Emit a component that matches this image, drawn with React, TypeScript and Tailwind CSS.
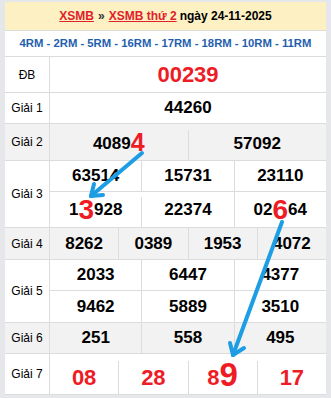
import React from 'react';

const line = 'border-[#dcdcdc]';

function Sep({ gap = 0 }: { gap?: number }) {
  // vertical divider between cells; some rows leave a small gap on top
  const top = gap === 7 ? 'mt-[7px]' : gap === 6 ? 'mt-[6px]' : gap === 5 ? 'mt-[5px]' : '';
  return <div className={`w-px self-stretch bg-[#dcdcdc] ${top}`} />;
}

function Cell({ children, size = 'text-[17px]', red = false }: { children: React.ReactNode; size?: string; red?: boolean }) {
  return (
    <div className={`flex-1 flex items-center justify-center font-bold ${size} ${red ? 'text-[#ee1c25]' : 'text-black'}`}>
      {children}
    </div>
  );
}

function Hi({ children, size }: { children: React.ReactNode; size: string }) {
  return <span className={`text-[#ee1c25] ${size} leading-none`}>{children}</span>;
}

function Row({ label, h, gray, children }: { label: string; h: string; gray?: boolean; children: React.ReactNode }) {
  return (
    <div className={`flex ${h} border-b ${line} ${gray ? 'bg-[#f2f2f2]' : 'bg-white'}`}>
      <div className={`w-[45px] shrink-0 flex items-center justify-center text-[12px] text-black border-r ${line}`}>{label}</div>
      <div className="flex-1 flex flex-col">{children}</div>
    </div>
  );
}

export default function App() {
  return (
    <div className="relative w-[331px] h-[398px] overflow-hidden bg-[#e6e7ea] font-['Liberation_Sans',Arial,sans-serif]">
      <div className="mx-[5px] mt-[2px] w-[321px]">
        {/* Header */}
        <div className={`h-[29px] bg-[#fdf1c4] border-b ${line} flex items-center justify-center text-[12px] font-bold text-black`}>
          <span className="text-[#e0202a] underline">XSMB</span>
          <span className="mx-[4px] text-[#333]">»</span>
          <span className="text-[#e0202a] underline">XSMB thứ 2</span>
          <span className="ml-[3px]">ngày 24-11-2025</span>
        </div>
        <div className={`h-[26px] bg-white border-b ${line} flex items-center justify-center text-[11.3px] font-bold text-[#1f5fae]`}>
          4RM - 2RM - 5RM - 16RM - 17RM - 18RM - 10RM - 11RM
        </div>

        <Row label="ĐB" h="h-[36px]">
          <div className="flex-1 flex">
            <Cell size="text-[22px]" red>00239</Cell>
          </div>
        </Row>

        <Row label="Giải 1" h="h-[31px]">
          <div className="flex-1 flex">
            <Cell>44260</Cell>
          </div>
        </Row>

        <Row label="Giải 2" h="h-[37px]" gray>
          <div className="flex-1 flex">
            <Cell>
              <span className="mt-[4px]">4089</span>
              <Hi size="text-[25px]">4</Hi>
            </Cell>
            <Sep gap={6} />
            <Cell><span className="mt-[4px]">57092</span></Cell>
          </div>
        </Row>

        <Row label="Giải 3" h="h-[67px]">
          <div className={`h-[31px] flex border-b ${line}`}>
            <Cell>63514</Cell>
            <Sep />
            <Cell>15731</Cell>
            <Sep />
            <Cell>23110</Cell>
          </div>
          <div className="flex-1 flex">
            <Cell>
              1<Hi size="text-[28px]">3</Hi>928
            </Cell>
            <Sep gap={5} />
            <Cell>22374</Cell>
            <Sep />
            <Cell>
              02<Hi size="text-[28px]">6</Hi>64
            </Cell>
          </div>
        </Row>

        <Row label="Giải 4" h="h-[32px]" gray>
          <div className="flex-1 flex">
            <Cell>8262</Cell>
            <Sep />
            <Cell>0389</Cell>
            <Sep />
            <Cell>1953</Cell>
            <Sep />
            <Cell>4072</Cell>
          </div>
        </Row>

        <Row label="Giải 5" h="h-[63px]">
          <div className={`h-[31px] flex border-b ${line}`}>
            <Cell>2033</Cell>
            <Sep />
            <Cell>6447</Cell>
            <Sep />
            <Cell>4377</Cell>
          </div>
          <div className="flex-1 flex">
            <Cell>9462</Cell>
            <Sep />
            <Cell>5889</Cell>
            <Sep />
            <Cell>3510</Cell>
          </div>
        </Row>

        <Row label="Giải 6" h="h-[31px]" gray>
          <div className="flex-1 flex">
            <Cell>251</Cell>
            <Sep />
            <Cell>558</Cell>
            <Sep />
            <Cell>495</Cell>
          </div>
        </Row>

        <Row label="Giải 7" h="h-[41px]">
          <div className="flex-1 flex">
            <Cell size="text-[22px]" red><span className="mt-[6px]">08</span></Cell>
            <Sep gap={7} />
            <Cell size="text-[22px]" red><span className="mt-[6px]">28</span></Cell>
            <Sep gap={7} />
            <Cell size="text-[22px]" red>
              <span className="mt-[6px]">8</span>
              <Hi size="text-[33px]">9</Hi>
            </Cell>
            <Sep gap={7} />
            <Cell size="text-[22px]" red><span className="mt-[6px]">17</span></Cell>
          </div>
        </Row>
      </div>

      {/* arrows drawn over the table */}
      <svg className="absolute left-0 top-0 pointer-events-none" width="331" height="398" viewBox="0 0 331 398">
        <g stroke="#1d9de4" strokeWidth="4" strokeLinecap="round" fill="none">
          <line x1="142" y1="153" x2="91" y2="196" />
          <line x1="91" y1="196" x2="103" y2="195" />
          <line x1="91" y1="196" x2="94" y2="184" />
          <line x1="282" y1="222" x2="233" y2="355" />
          <line x1="233" y1="355" x2="244" y2="348" />
          <line x1="233" y1="355" x2="230" y2="343" />
        </g>
      </svg>
    </div>
  );
}
